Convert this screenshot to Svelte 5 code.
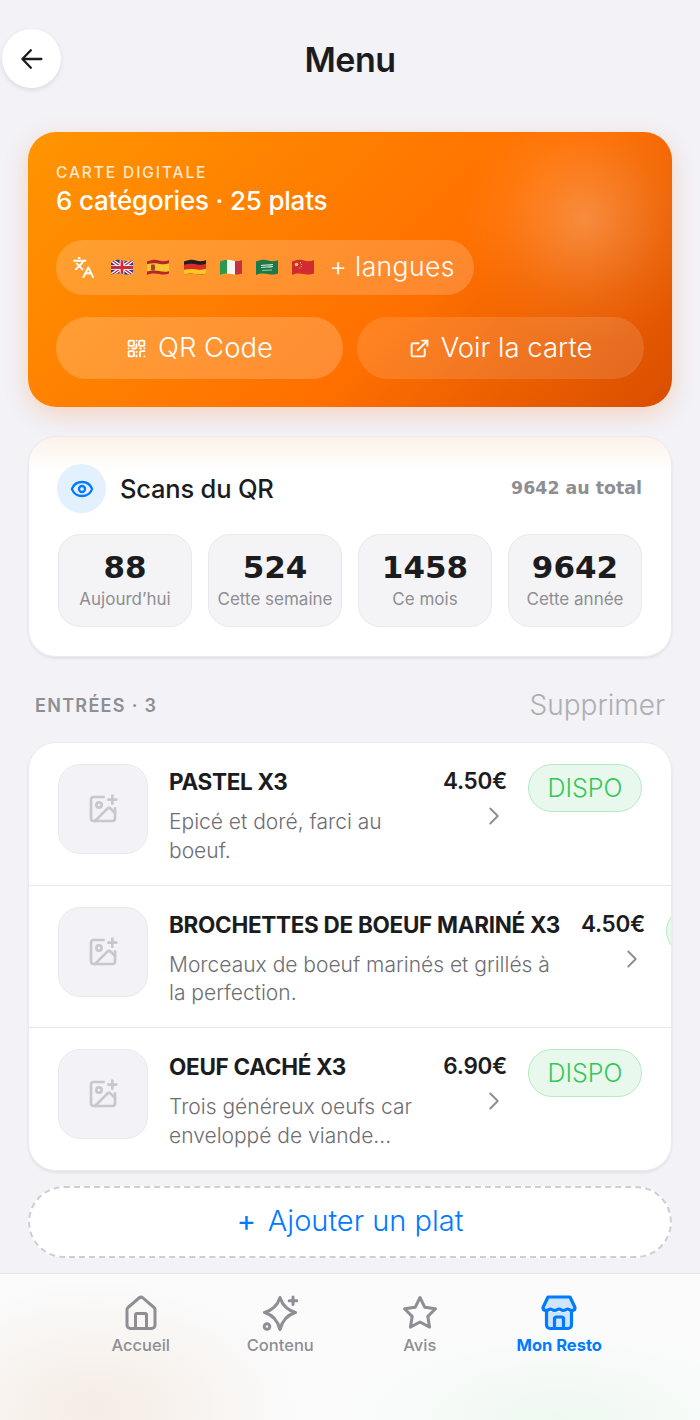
<script>
  const flagShape = 'M1 3.5C6 1.5 10 1.5 13 2.5S20 3.5 23 2V15.5C20 17 17 16.8 13 16S5 15.2 1 17Z';
  const stats = [
    { n: '88', l: 'Aujourd’hui' },
    { n: '524', l: 'Cette semaine' },
    { n: '1458', l: 'Ce mois' },
    { n: '9642', l: 'Cette année' }
  ];
  const dishes = [
    { t: 'PASTEL X3', d: 'Epicé et doré, farci au boeuf.', p: '4.50€' },
    { t: 'BROCHETTES DE BOEUF MARINÉ X3', d: 'Morceaux de boeuf marinés et grillés à la perfection.', p: '4.50€' },
    { t: 'OEUF CACHÉ X3', d: 'Trois généreux oeufs car enveloppé de viande...', p: '6.90€' }
  ];
</script>

<div class="page">
  <header class="top">
    <button class="back" aria-label="Retour">
      <svg width="28" height="28" viewBox="0 0 24 24" fill="none" stroke="#1c1c1e" stroke-width="2" stroke-linecap="round" stroke-linejoin="round"><path d="M20 12H4.500"/><path d="M11 4.500 3.800 12l7.200 7.500"/></svg>
    </button>
    <h1>Menu</h1>
  </header>

  <main>
    <section class="hero">
      <div class="eyebrow">CARTE DIGITALE</div>
      <div class="count">6 catégories · 25 plats</div>
      <div class="langs">
        <svg class="tr" width="23" height="23" viewBox="0 0 24 24" fill="none" stroke="#fff" stroke-width="2" stroke-linecap="round" stroke-linejoin="round"><path d="m5 8 6 6"/><path d="m4 14 6-6 2-3"/><path d="M2 5h12"/><path d="M7 2h1"/><path d="m22 22-5-10-5 10"/><path d="M14 18h6"/></svg>
        <div class="flags">
          <svg width="24" height="19" viewBox="0 0 24 19"><defs><clipPath id="f1"><path d={flagShape}/></clipPath></defs><g clip-path="url(#f1)"><rect width="24" height="19" fill="#2a3f86"/><path d="M0 1 24 18M24 1 0 18" stroke="#fff" stroke-width="3.600"/><path d="M0 1 24 18M24 1 0 18" stroke="#cf2a3c" stroke-width="1.300"/><path d="M12 0V19M0 9.500H24" stroke="#fff" stroke-width="4.600"/><path d="M12 0V19M0 9.500H24" stroke="#cf2a3c" stroke-width="2.800"/></g></svg>
          <svg width="24" height="19" viewBox="0 0 24 19"><defs><clipPath id="f2"><path d={flagShape}/></clipPath></defs><g clip-path="url(#f2)"><rect width="24" height="19" fill="#b3262d"/><path d="M0 6.500C6 4.500 12 5.500 14 6S20 6.500 24 5V13C20 14 17 14 13 13S5 12.200 0 13.800Z" fill="#f7c52e"/><rect x="5" y="6.500" width="4" height="6" rx="1" fill="#a5462b"/></g></svg>
          <svg width="24" height="19" viewBox="0 0 24 19"><defs><clipPath id="f3"><path d={flagShape}/></clipPath></defs><g clip-path="url(#f3)"><rect width="24" height="19" fill="#1f1f1f"/><path d="M0 7C6 5 12 6 14 6.500S20 7 24 5.500V24H0Z" fill="#dc2b28"/><path d="M0 12C6 10.400 12 11 14 11.500S20 12 24 10.500V24H0Z" fill="#f9c823"/></g></svg>
          <svg width="24" height="19" viewBox="0 0 24 19"><defs><clipPath id="f4"><path d={flagShape}/></clipPath></defs><g clip-path="url(#f4)"><rect width="8" height="19" fill="#2a9a4e"/><rect x="8" width="8" height="19" fill="#f5f5f2"/><rect x="16" width="8" height="19" fill="#c5303f"/></g></svg>
          <svg width="24" height="19" viewBox="0 0 24 19"><defs><clipPath id="f5"><path d={flagShape}/></clipPath></defs><g clip-path="url(#f5)"><rect width="24" height="19" fill="#1c7a48"/><path d="M6 7.500C10 6.500 14 7.500 18 6.500M6 9.500C10 8.500 14 9.500 18 8.500" stroke="#d9efe0" stroke-width="1.200" fill="none"/><path d="M7 12.500C10 12 14 12.500 17 12" stroke="#cfe8d6" stroke-width=".7" fill="none"/></g></svg>
          <svg width="24" height="19" viewBox="0 0 24 19"><defs><clipPath id="f6"><path d={flagShape}/></clipPath></defs><g clip-path="url(#f6)"><rect width="24" height="19" fill="#cf2b30"/><circle cx="5.500" cy="6.500" r="1.800" fill="#f8d13c"/><circle cx="9.400" cy="4.700" r=".6" fill="#f8d13c"/><circle cx="10.500" cy="6.500" r=".6" fill="#f8d13c"/><circle cx="10.300" cy="8.600" r=".6" fill="#f8d13c"/><circle cx="8.800" cy="10" r=".6" fill="#f8d13c"/></g></svg>
        </div>
        <span class="more">+ langues</span>
      </div>
      <div class="actions">
        <button class="act act-a">
          <svg width="21" height="21" viewBox="0 0 24 24" fill="none" stroke="#fff" stroke-width="2.200" stroke-linecap="round" stroke-linejoin="round"><rect width="6" height="6" x="3" y="3" rx="1"/><rect width="6" height="6" x="15" y="3" rx="1"/><rect width="6" height="6" x="3" y="15" rx="1"/><path d="M21 15h-3a2 2 0 0 0-2 2v4"/><path d="M21 21v.01"/><path d="M12 7v3a2 2 0 0 1-2 2H7"/><path d="M3 12h.01"/><path d="M12 3h.01"/><path d="M12 16v.01"/><path d="M16 12h1"/><path d="M21 12v.01"/><path d="M12 21v-1"/></svg>
          <span class="act-t">QR Code</span>
        </button>
        <button class="act act-b">
          <svg width="21" height="21" viewBox="0 0 24 24" fill="none" stroke="#fff" stroke-width="2.200" stroke-linecap="round" stroke-linejoin="round"><path d="M15 3h6v6"/><path d="M10 14 21 3"/><path d="M18 13v6a2 2 0 0 1-2 2H5a2 2 0 0 1-2-2V8a2 2 0 0 1 2-2h6"/></svg>
          <span class="act-t">Voir la carte</span>
        </button>
      </div>
    </section>

    <section class="scans">
      <div class="scan-head">
        <div class="eye">
          <svg width="24" height="24" viewBox="0 0 24 24" fill="none" stroke="#007aff" stroke-width="2.300" stroke-linecap="round" stroke-linejoin="round"><path d="M2.062 12.348a1 1 0 0 1 0-.696 10.750 10.750 0 0 1 19.876 0 1 1 0 0 1 0 .696 10.750 10.750 0 0 1-19.876 0"/><circle cx="12" cy="12" r="3"/></svg>
        </div>
        <div class="scan-title">Scans du QR</div>
        <div class="total">9642 au total</div>
      </div>
      <div class="tiles">
        {#each stats as s}
          <div class="tile">
            <div class="num">{s.n}</div>
            <div class="lab">{s.l}</div>
          </div>
        {/each}
      </div>
    </section>

    <div class="sec">
      <span class="sec-name">ENTRÉES · 3</span>
      <span class="sec-del">Supprimer</span>
    </div>

    <section class="list">
      {#each dishes as d}
        <article class="row">
          <div class="thumb">
            <svg width="32" height="32" viewBox="0 0 24 24" fill="none" stroke="#c7c7cc" stroke-width="2" stroke-linecap="round" stroke-linejoin="round"><path d="M16 5h6"/><path d="M19 2v6"/><path d="M21 11.500V19a2 2 0 0 1-2 2H5a2 2 0 0 1-2-2V5a2 2 0 0 1 2-2h7.500"/><path d="m21 15-3.086-3.086a2 2 0 0 0-2.828 0L6 21"/><circle cx="9" cy="9" r="2"/></svg>
          </div>
          <div class="info">
            <div class="name">{d.t}</div>
            <div class="desc">{d.d}</div>
          </div>
          <div class="pc">
            <div class="price">{d.p}</div>
            <svg class="chev" width="30" height="30" viewBox="0 0 24 24" fill="none" stroke="#8e8e93" stroke-width="1.500" stroke-linecap="round" stroke-linejoin="round"><path d="m9 18 6-6-6-6"/></svg>
          </div>
          <div class="pill">DISPO</div>
        </article>
      {/each}
    </section>

    <button class="add"><span class="plus">+</span><span>Ajouter un plat</span></button>
  </main>

  <nav class="tabs">
    <div class="tab">
      <svg width="38" height="38" viewBox="0 0 38 38" fill="none" stroke="#8e8e93" stroke-width="3" stroke-linecap="round" stroke-linejoin="round"><path d="M6 13.500 17 4a3 3 0 0 1 4 0L32 13.500a3 3 0 0 1 1 2.300V31a3.500 3.500 0 0 1-3.500 3.500h-21A3.500 3.500 0 0 1 5 31V15.800a3 3 0 0 1 1-2.300Z"/><path d="M13.500 34V21a1.500 1.500 0 0 1 1.500-1.500h8a1.500 1.500 0 0 1 1.500 1.500v13"/></svg>
      <span>Accueil</span>
    </div>
    <div class="tab">
      <svg width="38" height="38" viewBox="0 0 38 38" fill="none" stroke="#8e8e93" stroke-width="3" stroke-linecap="round" stroke-linejoin="round"><path d="M19 3.500Q22.500 15 34.500 18.500Q22.500 22 19 35.500Q15.500 22 3.500 18.500Q15.500 15 19 3.500Z"/><path d="M32 3v7.500M28.200 6.800h7.600"/><circle cx="6" cy="32.500" r="2.800"/></svg>
      <span>Contenu</span>
    </div>
    <div class="tab">
      <svg width="38" height="38" viewBox="0 0 38 38" fill="none" stroke="#8e8e93" stroke-width="3" stroke-linecap="round" stroke-linejoin="round"><path d="M19 3.500 23.800 13.300 34.500 14.800 26.800 22.400 28.600 33.100 19 28 9.400 33.100 11.200 22.400 3.500 14.800 14.200 13.300Z"/></svg>
      <span>Avis</span>
    </div>
    <div class="tab on">
      <svg width="38" height="38" viewBox="0 0 38 38" fill="none" stroke="#007aff" stroke-width="3.200" stroke-linecap="round" stroke-linejoin="round"><path d="M6.500 18V31a3.500 3.500 0 0 0 3.500 3.500h18a3.500 3.500 0 0 0 3.500-3.500V18" fill="#cfe4fd"/><path d="M8 3h22l5 10.500c0 2-1 3-3 3-2.500 0-3-1.500-4.300-1.500S25.500 16.500 23.400 16.500 20.500 15 19 15s-2.300 1.500-4.400 1.500S11.600 15 10.300 15 8.500 16.500 6 16.500c-2 0-3-1-3-3Z" fill="#cfe4fd"/><path d="M14.500 34V25a2 2 0 0 1 2-2h5a2 2 0 0 1 2 2v9"/></svg>
      <span>Mon Resto</span>
    </div>
  </nav>
</div>

<style>
  :global(body) { margin: 0; background: #f2f2f7; }
  .page {
    width: 700px; height: 1420px; overflow: hidden; position: relative;
    display: flex; flex-direction: column;
    background: #f2f2f7; color: #1c1c1e;
    font-family: Inter, "Liberation Sans", sans-serif;
  }
  button { font: inherit; border: 0; padding: 0; cursor: pointer; }
  .top { height: 60px; margin-top: 29px; display: flex; align-items: center; justify-content: center; position: relative; flex: none; }
  .back {
    position: absolute; left: 2px; top: 0; width: 59px; height: 59px; border-radius: 50%;
    background: #fff; box-shadow: 0 2px 5px rgba(0,0,0,.1);
    display: flex; align-items: center; justify-content: center;
  }
  h1 { margin: 0; font-size: 34px; font-weight: 600; letter-spacing: -.5px; }
  main { flex: 1; padding: 43px 28px 0; display: flex; flex-direction: column; }
  .hero {
    height: 275px; box-sizing: border-box; padding: 32px 28px 28px; border-radius: 28px; color: #fff;
    background:
      radial-gradient(circle 125px at 557px 88px, rgba(255,255,255,.24) 0%, rgba(255,255,255,.15) 30%, rgba(255,255,255,.05) 65%, rgba(255,255,255,0) 100%),
      linear-gradient(135deg, #ff9500 0%, #ff7000 60%, #d94e00 100%);
    box-shadow: 0 8px 24px rgba(255,107,0,.22);
    display: flex; flex-direction: column;
  }
  .eyebrow { font-size: 15.500px; line-height: 18px; letter-spacing: 1.900px; font-weight: 500; color: rgba(255,255,255,.82); }
  .count { margin-top: 2px; font-size: 26px; line-height: 34px; font-weight: 500; letter-spacing: -.2px; }
  .langs {
    margin-top: 22px; align-self: flex-start; height: 55px; box-sizing: border-box; padding: 0 19px 0 16px; border-radius: 28px;
    background: rgba(255,255,255,.18); display: flex; align-items: center;
  }
  .more { font-size: 26.500px; font-weight: 300; letter-spacing: .4px; padding-bottom: 3px; }
  .tr { margin-right: 15px; }
  .flags { display: flex; gap: 12.300px; margin-right: 14px; }
  .actions { margin-top: 22px; display: flex; gap: 14px; }
  .act {
    flex: 1; height: 62px; border-radius: 31px; color: #fff; font-size: 27.500px; font-weight: 300;
    display: flex; align-items: center; justify-content: center; gap: 11px;
  }
  .act-t { padding-bottom: 2px; }
  .act-a { background: rgba(255,255,255,.2); }
  .act-b { background: rgba(255,255,255,.13); }

  .scans {
    margin-top: 29px; height: 221px; box-sizing: border-box; padding: 27px 29px 0; border-radius: 28px; border: 1px solid #ebebef;
    background: linear-gradient(180deg, #fdf2e9 0, #fff 34px);
    box-shadow: 0 2px 3px rgba(0,0,0,.07);
  }
  .scan-head { display: flex; align-items: center; margin-left: -1px; }
  .eye { width: 49px; height: 49px; border-radius: 50%; background: #e3f0fe; display: flex; align-items: center; justify-content: center; }
  .scan-title { margin-left: 14px; font-size: 25.500px; font-weight: 500; letter-spacing: -.2px; }
  .total { margin-left: auto; font: 700 17.400px "DejaVu Sans", sans-serif; color: #8e8e93; position: relative; bottom: 1px; }
  .tiles { margin-top: 21px; display: flex; gap: 16px; }
  .tile {
    flex: 1; height: 93px; box-sizing: border-box; border-radius: 22px; background: #f4f4f6; border: 1px solid #e9e9ec;
    text-align: center; padding-top: 12px;
  }
  .num { font: 700 31px/40px "DejaVu Sans", sans-serif; color: #1c1c1e; }
  .lab { margin-top: 1px; font-size: 17px; line-height: 22px; color: #8e8e93; white-space: nowrap; }

  .sec { margin-top: 31px; height: 36px; display: flex; align-items: center; justify-content: space-between; padding: 0 7px; }
  .sec-name { font-size: 18px; font-weight: 600; letter-spacing: 1.300px; color: #8e8e93; position: relative; bottom: 1px; }
  .sec-del { font-size: 28px; font-weight: 300; color: #aeaeb2; position: relative; bottom: 1px; }

  .list {
    margin-top: 18px; height: 429px; box-sizing: border-box; border-radius: 28px; background: #fff; overflow: hidden; border: 1px solid #ebebef;
    box-shadow: 0 2px 3px rgba(0,0,0,.07);
    flex: none;
  }
  .row {
    height: 142.500px; box-sizing: border-box; padding: 21px 29px 0; display: flex; gap: 21px; align-items: flex-start;
    border-bottom: 1px solid #e5e5ea;
  }
  .row:last-child { border-bottom: 0; }
  .thumb {
    flex: none; width: 90px; height: 90px; box-sizing: border-box; border-radius: 22px; background: #f2f2f7; border: 1px solid #eaeaee;
    display: flex; align-items: center; justify-content: center;
  }
  .info { flex: 1; margin-top: 3px; }
  .name { font-size: 22.500px; line-height: 30px; font-weight: 700; white-space: nowrap; letter-spacing: -.3px; }
  .desc { margin-top: 11px; font-size: 21px; line-height: 28.500px; font-weight: 300; color: #6d6d72; }
  .pc { flex: none; display: flex; flex-direction: column; align-items: flex-end; margin-top: 2px; }
  .price { font-size: 22.500px; line-height: 30px; font-weight: 600; letter-spacing: -.3px; }
  .chev { margin-top: 5px; margin-right: -2px; }
  .pill {
    flex: none; width: 114px; height: 48px; box-sizing: border-box; border-radius: 24px; background: #e8f8ed; border: 1.500px solid #b5eac3;
    color: #34c759; font-size: 25px; font-weight: 300; display: flex; align-items: center; justify-content: center;
  }
  .add {
    margin-top: 15px; height: 72px; box-sizing: border-box; border-radius: 36px; background: #fff; border: 2px dashed #cfcfd3;
    color: #007aff; font-size: 29px; font-weight: 300; display: flex; align-items: center; justify-content: center; gap: 12px; padding-bottom: 3px;
  }
  .plus { font-weight: 400; }

  .tabs {
    flex: none; height: 147px; box-sizing: border-box; padding: 20px 71px 0; display: flex; border-top: 1px solid #e5e5ea;
    background:
      radial-gradient(ellipse 210px 130px at 95px 135px, rgba(243,233,222,.8), rgba(243,233,222,0)),
      radial-gradient(ellipse 220px 90px at 560px 145px, rgba(236,248,238,.8), rgba(236,248,238,0)),
      #fbfbfc;
  }
  .tab { flex: 1; display: flex; flex-direction: column; align-items: center; font-size: 16.500px; line-height: 22px; font-weight: 500; color: #8e8e93; }
  .tab svg { margin-bottom: 2px; }
  .tab.on { color: #007aff; font-weight: 700; }
</style>
